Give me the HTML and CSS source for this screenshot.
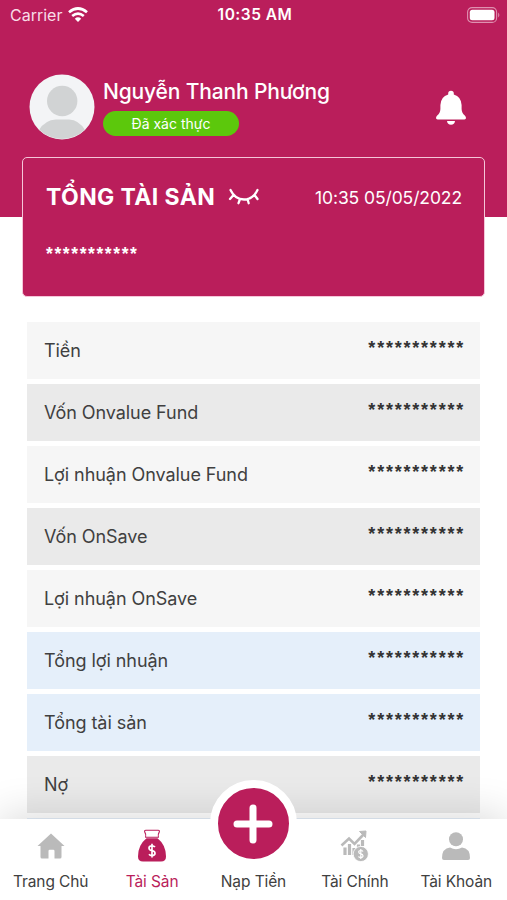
FILE: index.html
```html
<!DOCTYPE html>
<html lang="vi">
<head>
    <meta charset="UTF-8">
    <meta name="viewport" content="width=device-width, initial-scale=1.0">
    <title>Tài Sản</title>
    <link rel="stylesheet" href="styles.css">
</head>
<body>
    <div class="app">
        <header class="header">
            <div class="status-bar">
                <div class="carrier">
                    <span>Carrier</span>
                    <svg width="20" height="15" viewBox="0 0 20 15" fill="none" stroke="#fff" stroke-width="2.7">
                        <path d="M1 5.3Q10-2.3 19 5.3"/>
                        <path d="M4.2 9Q10 4.2 15.8 9"/>
                        <path d="M10 15L6.8 11.7Q10 9 13.2 11.7Z" fill="#fff" stroke="none"/>
                    </svg>
                </div>
                <div class="clock">10:35 AM</div>
                <svg class="battery" width="33" height="16" viewBox="0 0 33 16">
                    <rect x=".6" y=".6" width="29" height="14.8" rx="4.5" fill="none" stroke="#df91b0" stroke-width="1.1"/>
                    <rect x="2.8" y="2.8" width="24.7" height="10.4" rx="2.5" fill="#fff"/>
                    <path d="M31.2 5.5Q33.5 8 31.2 10.5Z" fill="#df91b0"/>
                </svg>
            </div>
            <div class="profile">
                <svg class="avatar" width="66" height="66" viewBox="0 0 66 66">
                    <clipPath id="avatar-clip"><circle cx="33" cy="33" r="32"/></clipPath>
                    <circle cx="33" cy="33" r="32.5" fill="#f3f4f6"/>
                    <circle cx="33.2" cy="27" r="15.2" fill="#d1d3d4"/>
                    <path clip-path="url(#avatar-clip)" d="M10 66V56Q16 46 27 45.5H40Q50 46 56 56V66Z" fill="#d1d3d4"/>
                </svg>
                <div class="user">
                    <div class="user-name">Nguyễn Thanh Phương</div>
                    <div class="badge">Đã xác thực</div>
                </div>
                <svg class="bell" width="32" height="36" viewBox="0 0 32 36" fill="#fff">
                    <path d="M13.2 3.5Q13.2.8 16 .8T18.8 3.5V4.4Q26.2 6.5 26.6 15V19Q26.8 23.5 29.8 25.4 31 26.4 31 28 31 29.4 29.4 29.4H2.6Q1 29.4 1 28 1 26.4 2.2 25.4 5.2 23.5 5.4 19V15Q5.8 6.5 13.2 4.4Z"/>
                    <path d="M12 31H20Q19.5 34.8 16 34.8T12 31Z"/>
                </svg>
            </div>
        </header>

        <section class="total-card">
            <div class="total-top">
                <h1>TỔNG TÀI SẢN</h1>
                <svg width="32" height="20" viewBox="0 0 32 20" fill="none" stroke="#fff" stroke-width="2.3" stroke-linecap="round">
                    <path d="M2.5 3Q7 12.5 16 12.5T29.5 3M5.5 8L2 12M26.5 8L29.5 12M12 12L10.5 16.2M19.5 12L20.7 16.2"/>
                </svg>
                <span class="date">10:35 05/05/2022</span>
            </div>
            <div class="hidden-value">***********</div>
        </section>

        <main class="asset-list">
            <div class="row"><span>Tiền</span><span class="hidden-value">***********</span></div>
            <div class="row dark"><span>Vốn Onvalue Fund</span><span class="hidden-value">***********</span></div>
            <div class="row"><span>Lợi nhuận Onvalue Fund</span><span class="hidden-value">***********</span></div>
            <div class="row dark"><span>Vốn OnSave</span><span class="hidden-value">***********</span></div>
            <div class="row"><span>Lợi nhuận OnSave</span><span class="hidden-value">***********</span></div>
            <div class="row blue"><span>Tổng lợi nhuận</span><span class="hidden-value">***********</span></div>
            <div class="row blue"><span>Tổng tài sản</span><span class="hidden-value">***********</span></div>
            <div class="row dark"><span>Nợ</span><span class="hidden-value">***********</span></div>
            <div class="row blue"></div>
        </main>

        <nav class="tab-bar">
            <a class="tab">
                <svg width="30" height="34" viewBox="0 0 30 34" fill="#bababa">
                    <path d="M15 4.5L28.5 17H25.5V28Q25.5 29.5 24 29.5H18.5V22Q18.5 20.8 17.3 20.8H13.7Q12.5 20.8 12.5 22V29.5H6Q4.5 29.5 4.5 28V17H1.5Z"/>
                </svg>
                <span>Trang Chủ</span>
            </a>
            <a class="tab active">
                <svg width="30" height="34" viewBox="0 0 30 34">
                    <path d="M8.6 8.3Q9.4 5.5 7.6 2.6 7.4 1.3 8.8 1.3H21.2Q22.6 1.3 22.4 2.6 20.6 5.5 21.4 8.3Z" fill="none" stroke="#ba1e5b" stroke-width="1.1" stroke-linejoin="round"/>
                    <path d="M9.5 9.3H20.5Q29 16 29 27.5 29 32.5 24 32.5H6Q1 32.5 1 27.5 1 16 9.5 9.3Z" fill="#ba1e5b"/>
                    <path d="M18 18Q17 16.8 15 16.8 12 16.8 12 19T15 21.6 18 24.3 15 26.6Q13 26.6 12 25.3M15 14.7V28.5" fill="none" stroke="#fff" stroke-width="1.7"/>
                </svg>
                <span>Tài Sản</span>
            </a>
            <a class="tab deposit">
                <span class="plus">
                    <svg width="40" height="40" viewBox="0 0 40 40" stroke="#fff" stroke-width="7" stroke-linecap="round">
                        <path d="M20 4V36M4 20H36"/>
                    </svg>
                </span>
                <span>Nạp Tiền</span>
            </a>
            <a class="tab">
                <svg width="30" height="34" viewBox="0 0 30 34" fill="none" stroke="#bababa">
                    <path d="M1.5 16.5L9 9.5 14.5 15 24 5" stroke-width="2.6"/>
                    <path d="M19.5 2.5L26 2 25.5 8.5Z" fill="#bababa" stroke-width="1"/>
                    <path d="M5 18.5V26M9.5 15V26M14 19V26M18.5 15.5V19M22.5 11V17" stroke-width="3.2"/>
                    <circle cx="20.8" cy="25" r="7.6" fill="#bababa" stroke="#fff" stroke-width=".8"/>
                    <path d="M23 22.5Q22.5 21.5 20.8 21.5 18.7 21.5 18.7 23T20.8 24.8 23 26.8 20.8 28.5Q19 28.5 18.5 27.5M20.8 20V30" stroke="#fff" stroke-width="1.2"/>
                </svg>
                <span>Tài Chính</span>
            </a>
            <a class="tab">
                <svg width="30" height="34" viewBox="0 0 30 34" fill="#bababa">
                    <circle cx="15" cy="10.3" r="7"/>
                    <path d="M1 29Q1 19.5 9 18.6 15 22 21 18.6 29 19.5 29 29Q29 31 27 31H3Q1 31 1 29Z"/>
                </svg>
                <span>Tài Khoản</span>
            </a>
        </nav>
    </div>
</body>
</html>
```

FILE: styles.css
```css
* {
    box-sizing: border-box;
}

body {
    margin: 0;
    font-family: Inter, Roboto, sans-serif;
    background-color: #fff;
    color: #404040;
}

.app {
    display: flex;
    flex-direction: column;
    height: 900px;
    overflow: hidden;
}

/* Header */
.header {
    flex: none;
    height: 217px;
    background-color: #ba1e5b;
    color: #fff;
}

.status-bar {
    display: grid;
    grid-template-columns: 1fr auto 1fr;
    align-items: center;
    height: 29px;
    padding: 0 7px 0 10px;
    font-size: 16px;
}

.carrier {
    display: flex;
    align-items: center;
    gap: 6px;
    color: #f8dce7;
}

.clock {
    font-weight: 600;
    font-size: 15.5px;
    letter-spacing: 0.5px;
}

.battery {
    justify-self: end;
}

.profile {
    display: flex;
    align-items: center;
    margin-top: 45px;
    padding: 0 40px 0 29px;
}

.user {
    flex: 1;
    margin-left: 8px;
}

.user-name {
    font-size: 21px;
    font-weight: 500;
    line-height: 28px;
    letter-spacing: -0.15px;
    white-space: nowrap;
}

.badge {
    width: 136px;
    height: 25px;
    margin-top: 5px;
    border-radius: 13px;
    background-color: #5cc80c;
    font-size: 14px;
    line-height: 25px;
    text-align: center;
}

.bell {
    margin-top: 2px;
}

/* Total assets */
.total-card {
    flex: none;
    height: 140px;
    margin: -60px 22px 0;
    padding: 20px 22px 0 23px;
    border: 1.5px solid #f5c6d9;
    border-radius: 5px;
    background-color: #ba1e5b;
    color: #fff;
}

.total-top {
    display: flex;
    align-items: center;
    height: 38px;
}

.total-top h1 {
    margin: 0 13px 0 0;
    font-size: 23px;
    font-weight: 700;
    letter-spacing: 0.4px;
    white-space: nowrap;
}

.date {
    margin-left: auto;
    font-size: 17.5px;
    letter-spacing: -0.1px;
}

.hidden-value {
    font-family: "Liberation Sans", Arial, sans-serif;
    font-size: 18px;
    font-weight: 700;
    letter-spacing: 1.78px;
    margin-right: -2px;
}

.total-card .hidden-value {
    margin-top: 28px;
    font-size: 17.5px;
    letter-spacing: 1.6px;
}

/* Asset rows */
.asset-list {
    display: flex;
    flex-direction: column;
    gap: 5px;
    height: 498px;
    margin: 25px 27px 0;
    overflow: hidden;
}

.row {
    display: flex;
    flex: none;
    justify-content: space-between;
    height: 57px;
    padding: 0 17px;
    background-color: #f6f6f6;
    font-size: 18px;
    line-height: 57px;
    letter-spacing: -0.06px;
}

.row .hidden-value {
    color: #333;
    line-height: 53px;
}

.dark {
    background-color: #eaeaea;
}

.blue {
    background-color: #e5effa;
}

/* Bottom tabs */
.tab-bar {
    display: grid;
    grid-template-columns: repeat(5, 1fr);
    flex: none;
    position: relative;
    height: 81px;
    background-color: #fff;
    box-shadow: 0 -4px 40px rgba(0, 0, 0, 0.15);
}

.tab {
    display: flex;
    flex-direction: column;
    align-items: center;
    gap: 8px;
    padding-top: 10px;
    font-size: 15.5px;
    line-height: 22px;
    letter-spacing: -0.1px;
    white-space: nowrap;
}

.active {
    color: #ba1e5b;
}

.deposit {
    gap: 4px;
    margin-top: -39px;
    padding-top: 0;
}

.plus {
    display: flex;
    align-items: center;
    justify-content: center;
    width: 87px;
    height: 87px;
    border: 8px solid #fff;
    border-radius: 50%;
    background-color: #ba1e5b;
}
```
